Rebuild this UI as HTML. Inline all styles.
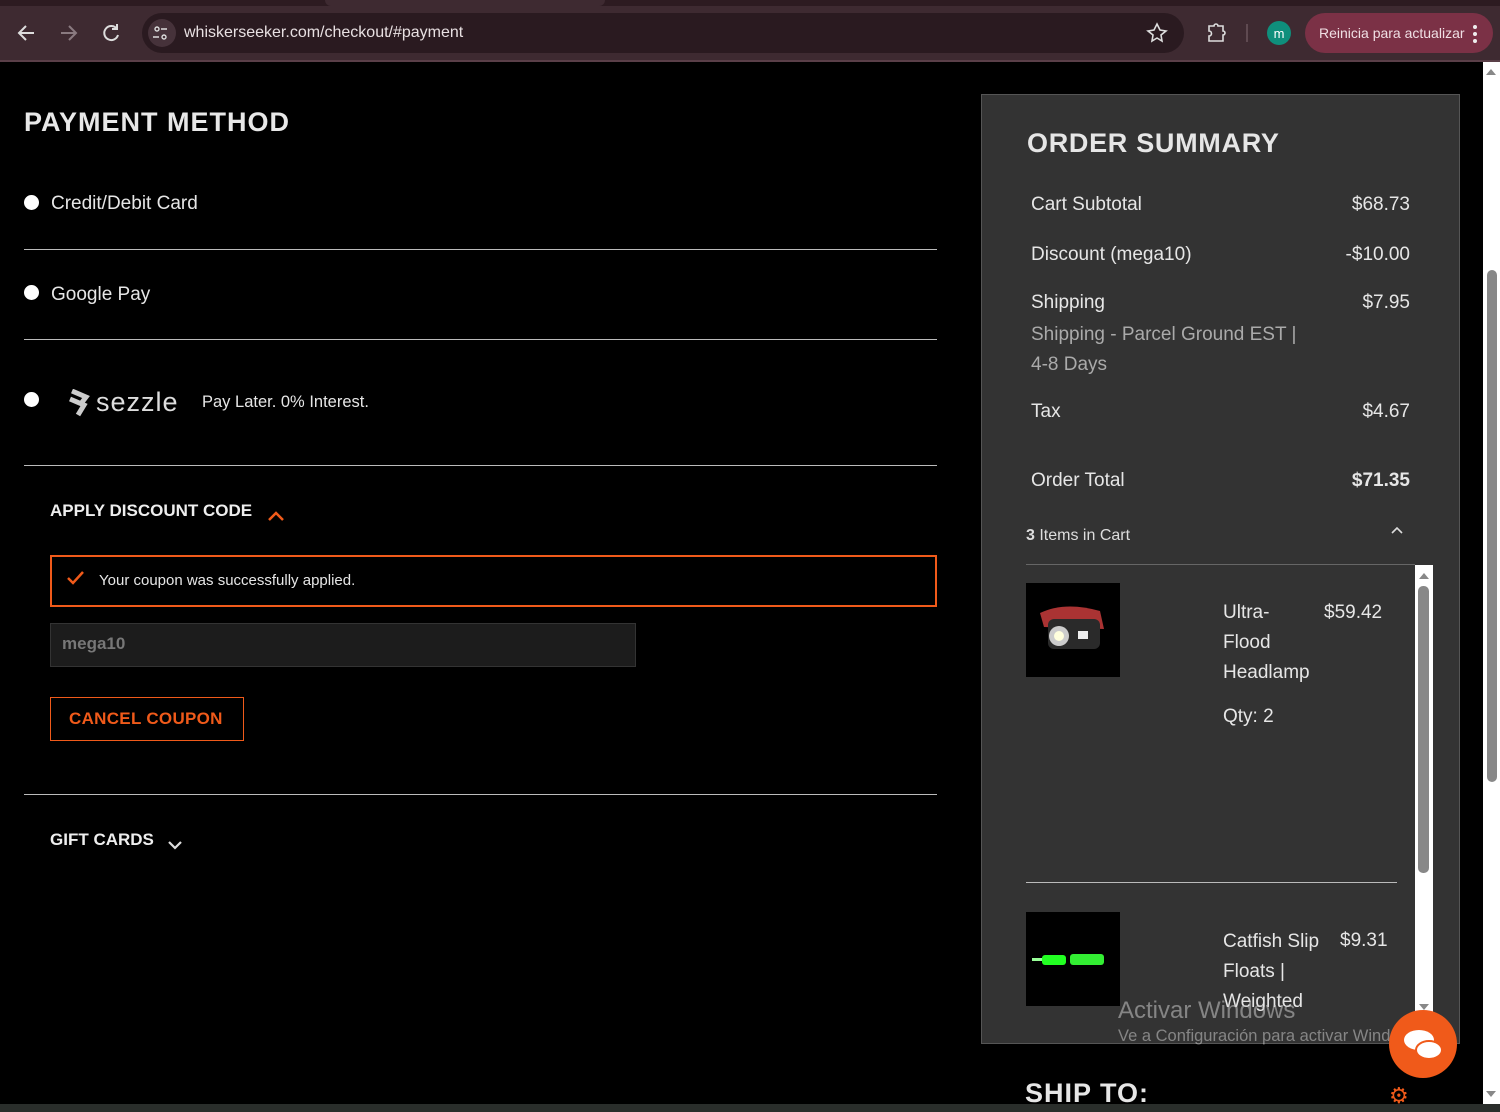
<!DOCTYPE html>
<html><head><meta charset="utf-8"><style>
*{margin:0;padding:0;box-sizing:border-box}
body{width:1500px;height:1112px;background:#000;font-family:"Liberation Sans",sans-serif;color:#eee;position:relative;overflow:hidden}
.a{position:absolute}
.t{font-size:19px;color:#e6e6e6}
.hr{position:absolute;height:1px;background:#bbb}
.rad{position:absolute;width:15px;height:15px;border-radius:50%;background:#fff}
.h{font-weight:bold;letter-spacing:1px}
.row{position:absolute;left:1031px;width:379px;font-size:19px;color:#e6e6e6;display:flex;justify-content:space-between}
</style></head><body>
<div class="a" style="left:0;top:0;width:1500px;height:62px;background:#3e2a31"></div>
<div class="a" style="left:0;top:0;width:1500px;height:6px;background:#2d1b21"></div>
<div class="a" style="left:325px;top:0;width:280px;height:6px;background:#3e2a31;border-radius:0 0 6px 6px"></div>
<div class="a" style="left:0;top:60px;width:1500px;height:2px;background:#5a3f48"></div>
<div class="a" style="left:142px;top:13px;width:1042px;height:40px;border-radius:20px;background:#2a1a20"></div>
<div class="a" style="left:148px;top:19px;width:28px;height:28px;border-radius:50%;background:#46323a"></div>
<svg class="a" style="left:0;top:0" width="1500" height="62">
<g stroke="#ddd" stroke-width="2" fill="none">
<path d="M34 33H19M26 26l-7 7 7 7"/>
<path d="M61 33h15M69 26l7 7-7 7" stroke="#8a7a80"/>
<path d="M117 29a7 7 0 1 0 1 6M117 24v5h-5"/>
<path d="M1157 24l3 6 6 1-5 4 1 6-5-3-5 3 1-6-5-4 6-1z" stroke-width="1.6"/>
<path d="M1209 26h5a2 2 0 0 1 4 0h5v5a2 2 0 0 1 0 4v6h-14v-5a2 2 0 0 0 0-5z" stroke-width="1.6"/>
<circle cx="157" cy="29" r="2" stroke-width="1.4"/><path d="M161 29h6M153 37h6" stroke-width="1.4"/><circle cx="164" cy="37" r="2" stroke-width="1.4"/>
</g>
<line x1="1247" y1="24" x2="1247" y2="42" stroke="#6a555c" stroke-width="1.5"/>
<circle cx="1279" cy="33" r="12" fill="#0f8f7c"/>
<text x="1279" y="38" fill="#fff" font-size="13" text-anchor="middle" font-family="Liberation Sans">m</text>
</svg>
<div class="a" style="left:184px;top:24px;font-size:16px;color:#e8e0e2">whiskerseeker.com/checkout/#payment</div>
<div class="a" style="left:1305px;top:13px;width:188px;height:40px;border-radius:20px;background:#7b3146"></div>
<div class="a" style="left:1319px;top:25px;font-size:14px;color:#f0dfe4">Reinicia para actualizar</div>
<div class="a" style="left:1473px;top:25px;width:4px;height:4px;border-radius:2px;background:#eee;box-shadow:0 7px 0 #eee,0 14px 0 #eee"></div>

<div class="a h" style="left:24px;top:107px;font-size:27px;color:#e8e8e8">PAYMENT METHOD</div>
<div class="rad" style="left:24px;top:195px"></div>
<div class="a t" style="left:51px;top:193px">Credit/Debit Card</div>
<div class="hr" style="left:24px;top:249px;width:913px"></div>
<div class="rad" style="left:24px;top:285px"></div>
<div class="a t" style="left:51px;top:284px">Google Pay</div>
<div class="hr" style="left:24px;top:339px;width:913px"></div>
<div class="rad" style="left:24px;top:392px"></div>
<svg class="a" style="left:66px;top:389px" width="26" height="28"><path d="M6 2l14 6-6 8M4 10l14 6-6 10" stroke="#ccc" stroke-width="5" fill="none"/></svg>
<div class="a" style="left:96px;top:387px;font-size:27px;color:#ddd;letter-spacing:1px">sezzle</div>
<div class="a" style="left:202px;top:393px;font-size:16.5px;color:#e6e6e6">Pay Later. 0% Interest.</div>
<div class="hr" style="left:24px;top:465px;width:913px"></div>
<div class="a h" style="left:50px;top:501px;font-size:17px;color:#eee;letter-spacing:0">APPLY DISCOUNT CODE</div>
<svg class="a" style="left:266px;top:509px" width="20" height="14"><path d="M3 11l7-7 7 7" stroke="#f05a1a" stroke-width="2.5" fill="none"/></svg>
<div class="a" style="left:50px;top:555px;width:887px;height:52px;border:2px solid #f05a1a"></div>
<svg class="a" style="left:66px;top:570px" width="20" height="16"><path d="M2 8l5 5 10-11" stroke="#f05a1a" stroke-width="2.5" fill="none"/></svg>
<div class="a" style="left:99px;top:572px;font-size:15px;color:#e6e6e6">Your coupon was successfully applied.</div>
<div class="a" style="left:50px;top:623px;width:586px;height:44px;background:#1c1c1c;border:1px solid #333"></div>
<div class="a" style="left:62px;top:634px;font-size:17px;font-weight:bold;color:#777">mega10</div>
<div class="a" style="left:50px;top:697px;width:194px;height:44px;border:1.5px solid #f05a1a"></div>
<div class="a h" style="left:69px;top:709px;font-size:17px;color:#f05a1a;letter-spacing:.3px">CANCEL COUPON</div>
<div class="hr" style="left:24px;top:794px;width:913px"></div>
<div class="a h" style="left:50px;top:830px;font-size:17px;color:#eee;letter-spacing:0">GIFT CARDS</div>
<svg class="a" style="left:166px;top:838px" width="18" height="14"><path d="M3 4l6 6 6-6" stroke="#ddd" stroke-width="2.2" fill="none"/></svg>

<div class="a" style="left:981px;top:94px;width:479px;height:950px;background:#333;border:1px solid #555"></div>
<div class="a h" style="left:1027px;top:128px;font-size:27px;color:#e6e6e6;letter-spacing:.7px">ORDER SUMMARY</div>
<div class="row" style="top:194px"><span>Cart Subtotal</span><span>$68.73</span></div>
<div class="row" style="top:244px"><span>Discount (mega10)</span><span>-$10.00</span></div>
<div class="row" style="top:292px"><span>Shipping</span><span>$7.95</span></div>
<div class="a" style="left:1031px;top:320px;font-size:19px;color:#aaa;line-height:30px">Shipping - Parcel Ground EST |<br>4-8 Days</div>
<div class="row" style="top:401px"><span>Tax</span><span>$4.67</span></div>
<div class="row" style="top:470px"><span>Order Total</span><b>$71.35</b></div>
<div class="a" style="left:1026px;top:527px;font-size:16px;color:#ddd"><b>3</b> Items in Cart</div>
<svg class="a" style="left:1389px;top:524px" width="16" height="12"><path d="M3 9l5-5 5 5" stroke="#ddd" stroke-width="1.6" fill="none"/></svg>
<div class="hr" style="left:1026px;top:564px;width:389px;background:#666"></div>
<div class="a" style="left:1415px;top:565px;width:18px;height:450px;background:#fff"></div>
<div class="a" style="left:1418px;top:586px;width:11px;height:287px;border-radius:5px;background:#888"></div>
<svg class="a" style="left:1415px;top:566px" width="18" height="450"><path d="M4 13l5-6 5 6z" fill="#888"/><path d="M4 438l5 6 5-6z" fill="#888"/></svg>
<div class="a" style="left:1026px;top:583px;width:94px;height:94px;background:#000"></div>
<svg class="a" style="left:1026px;top:583px" width="94" height="94"><path d="M14 30q25-12 60-2l4 18-60-2z" fill="#a33"/><rect x="22" y="36" width="52" height="30" rx="6" fill="#2a2a2a"/><circle cx="33" cy="53" r="10" fill="#ccc"/><circle cx="33" cy="53" r="5" fill="#ffd"/><rect x="52" y="48" width="10" height="8" fill="#eee"/></svg>
<div class="a" style="left:1223px;top:598px;font-size:19px;color:#e6e6e6;line-height:30px">Ultra-<br>Flood<br>Headlamp</div>
<div class="a" style="left:1324px;top:598px;font-size:19px;color:#e6e6e6;line-height:30px">$59.42</div>
<div class="a" style="left:1223px;top:706px;font-size:19px;color:#e6e6e6">Qty: 2</div>
<div class="hr" style="left:1026px;top:882px;width:371px;background:#bbb"></div>
<div class="a" style="left:1026px;top:912px;width:94px;height:94px;background:#000"></div>
<svg class="a" style="left:1026px;top:912px" width="94" height="94"><rect x="16" y="43" width="24" height="10" rx="3" fill="#2f2"/><rect x="44" y="42" width="34" height="11" rx="3" fill="#3e3"/><rect x="6" y="46" width="10" height="3" fill="#9f9"/></svg>
<div class="a" style="left:1223px;top:927px;font-size:19px;color:#e6e6e6;line-height:30px">Catfish Slip<br>Floats |<br>Weighted</div>
<div class="a" style="left:1340px;top:930px;font-size:19px;color:#e6e6e6">$9.31</div>
<div class="a h" style="left:1025px;top:1078px;font-size:27px;color:#e6e6e6">SHIP TO:</div>
<div class="a" style="left:1389px;top:1083px;font-size:22px;color:#f05a1a">⚙</div>
<div class="a" style="left:1118px;top:997px;font-size:24px;color:rgba(200,200,200,.55)">Activar Windows</div>
<div class="a" style="left:1118px;top:1027px;font-size:16.5px;color:rgba(200,200,200,.55)">Ve a Configuración para activar Windows.</div>
<div class="a" style="left:1389px;top:1010px;width:68px;height:68px;border-radius:50%;background:#f05a1a"></div>
<svg class="a" style="left:1389px;top:1010px" width="68" height="68"><ellipse cx="30" cy="30" rx="15" ry="10" fill="#fff"/><ellipse cx="40" cy="40" rx="13" ry="9" fill="#fff" stroke="#f05a1a" stroke-width="2"/></svg>

<div class="a" style="left:1483px;top:62px;width:17px;height:1042px;background:#fff"></div>
<div class="a" style="left:1487px;top:270px;width:10px;height:512px;border-radius:5px;background:#888"></div>
<svg class="a" style="left:1483px;top:62px" width="17" height="1042"><path d="M3 13l5-6 5 6z" fill="#888"/><path d="M3 1029l5 6 5-6z" fill="#888"/></svg>
<div class="a" style="left:0;top:1104px;width:1500px;height:8px;background:#2a2e2b"></div>
</body></html>
